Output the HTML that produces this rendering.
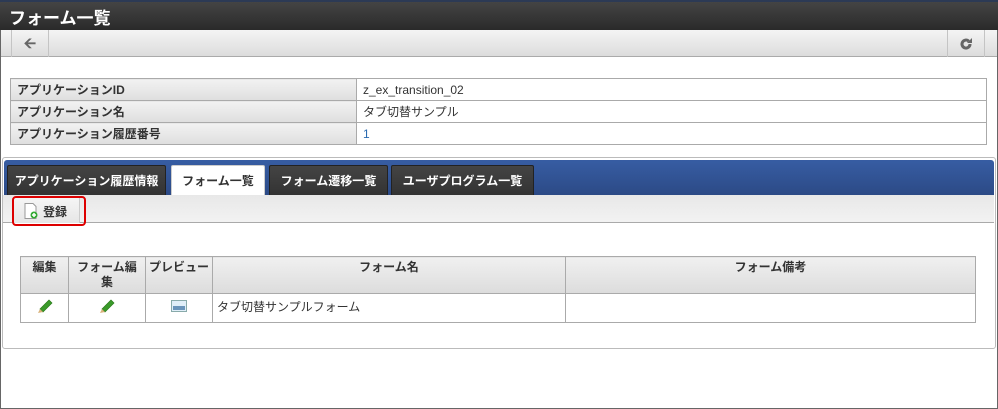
<!DOCTYPE html>
<html><head><meta charset="utf-8"><style>
*{box-sizing:border-box;margin:0;padding:0}
body{width:998px;height:409px;position:relative;overflow:hidden;background:#fff;font-family:"Liberation Sans","Noto Sans CJK JP",sans-serif;font-size:12px;color:#333}
.a{position:absolute}
.frame{left:0;top:0;width:998px;height:409px;border:1px solid #666;border-top:none}
.hdr{left:0;top:0;width:998px;height:30px;background:linear-gradient(#444,#2a2a2a);border-top:2px solid #2c3a55;color:#fff;font-size:17px;font-weight:bold;padding:2px 0 0 9px}
.tb{left:1px;top:30px;width:996px;height:27px;background:linear-gradient(#f4f4f4,#dcdcdc);border-bottom:1px solid #aaa}
.btn{top:30px;height:27px;width:38px;border-left:1px solid #c4c4c4;border-right:1px solid #c4c4c4;color:#666;font-size:15px;font-weight:bold;text-align:center;line-height:27px}
table{border-collapse:collapse;position:absolute}
td,th{border:1px solid #aaa}
.info td{height:22px;padding:0 6px;font-size:12px}
.info td.l{background:linear-gradient(#f2f2f2,#dedede);font-weight:bold;width:346px}
.tabc{left:2px;top:157px;width:994px;height:192px;border:1px solid #bbb;border-radius:3px}
.bar{left:4px;top:160px;width:990px;height:35px;background:linear-gradient(#375da3,#2c4a86);border-radius:3px 3px 0 0}
.tab{top:165px;height:30px;background:linear-gradient(#444,#333);border:1px solid #222;border-bottom:none;color:#fff;font-weight:bold;font-size:12px;text-align:center;line-height:30px;border-radius:2px 2px 0 0}
.tab.on{background:#fff;color:#333;border-color:#ccc}
.sub{left:3px;top:195px;width:991px;height:28px;background:linear-gradient(#e8e8e8,#f2f2f2);border-bottom:1px solid #aaa}
.grid th{background:linear-gradient(#f0f0f0,#dcdcdc);font-size:12px;font-weight:bold;vertical-align:top;padding-top:3px;height:37px;line-height:15px}
.grid td{height:29px;vertical-align:top;padding:4px 4px}
</style></head><body>
<div class="a frame"></div>
<div class="a hdr">フォーム一覧</div>
<div class="a tb"></div>
<div class="a btn" style="left:11px">&#129128;</div>
<div class="a btn" style="left:947px">
<svg width="14" height="14" viewBox="0 0 14 14" style="margin-top:7px"><path d="M11 7a4 4 0 1 1-1.2-2.8" fill="none" stroke="#666" stroke-width="3"/><path d="M13 1v5H8z" fill="#666"/></svg></div>
<table class="info" style="left:10px;top:78px;width:977px">
<tr><td class="l">アプリケーションID</td><td>z_ex_transition_02</td></tr>
<tr><td class="l">アプリケーション名</td><td>タブ切替サンプル</td></tr>
<tr><td class="l">アプリケーション履歴番号</td><td style="color:#2a6ab0">1</td></tr>
</table>
<div class="a tabc"></div>
<div class="a bar"></div>
<div class="a tab" style="left:7px;width:159px">アプリケーション履歴情報</div>
<div class="a tab on" style="left:171px;width:94px">フォーム一覧</div>
<div class="a tab" style="left:269px;width:119px">フォーム遷移一覧</div>
<div class="a tab" style="left:391px;width:143px">ユーザプログラム一覧</div>
<div class="a sub"></div>
<div class="a" style="left:14px;top:197px;width:66px;height:26px;border-right:1px solid #ccc;background:linear-gradient(#f6f6f6,#e6e6e6)"></div>
<div class="a" style="left:12px;top:196px;width:74px;height:30px;border:2px solid #d00;border-radius:4px"></div>
<svg class="a" style="left:24px;top:203px" width="14" height="16" viewBox="0 0 14 16"><path d="M1 .5h8l3 3V15.5H1z" fill="#fff" stroke="#999"/><circle cx="10" cy="12" r="3.5" fill="#3a3"/><path d="M10 10v4M8 12h4" stroke="#fff" stroke-width="1.5"/></svg>
<div class="a" style="left:43px;top:203px;font-size:12px;font-weight:bold">登録</div>
<table class="grid" style="left:20px;top:256px;width:956px">
<tr><th style="width:48px">編集</th><th style="width:77px">フォーム編<br>集</th><th style="width:67px">プレビュー</th><th style="width:353px">フォーム名</th><th>フォーム備考</th></tr>
<tr><td style="text-align:center"><svg width="18" height="16" viewBox="0 0 18 16"><path d="M4 11l9-9 3 3-9 9z" fill="#3a9a2a" stroke="#2a7a1a" stroke-width=".7"/><path d="M4 11l-2 4 5-1z" fill="#d9b27a"/></svg></td>
<td style="text-align:center"><svg width="18" height="16" viewBox="0 0 18 16"><path d="M4 11l9-9 3 3-9 9z" fill="#3a9a2a" stroke="#2a7a1a" stroke-width=".7"/><path d="M4 11l-2 4 5-1z" fill="#d9b27a"/></svg></td>
<td style="text-align:center"><svg width="16" height="12" viewBox="0 0 16 12" style="margin-top:2px"><rect x=".5" y=".5" width="15" height="11" fill="#e0eef8" stroke="#8aa"/><rect x="2" y="6" width="12" height="4" fill="#6a94ba"/></svg></td>
<td>タブ切替サンプルフォーム</td><td></td></tr>
</table>
</body></html>
